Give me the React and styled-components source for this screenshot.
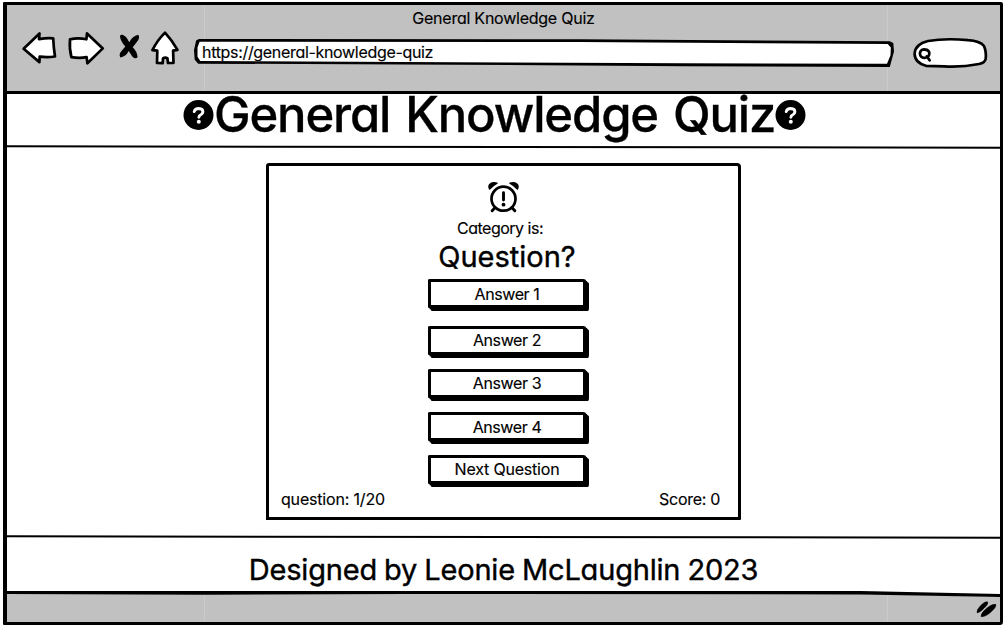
import React from "react";
import styled, { createGlobalStyle } from "styled-components";

const ink = "#000";
const chromeGray = "#c1c1c1";

const GlobalStyle = createGlobalStyle`
  * { box-sizing: border-box; }
  body {
    margin: 0;
    background: #fff;
    color: ${ink};
    font-family: Inter, "Liberation Sans", sans-serif;
    font-feature-settings: "cv11" 1;
    overflow: hidden;
  }
`;

const Window = styled.div`
  display: flex;
  flex-direction: column;
  width: 1000px;
  height: 623px;
  margin: 2px 0 0 3px;
  border: 3px solid ${ink};
  border-left-width: 4px;
  border-radius: 1px 2px 3px 1px;
`;

const Label = styled.span`
  display: block;
  margin: 0;
  font-size: ${(p) => p.$size || 16}px;
  line-height: ${(p) => p.$line || 20}px;
  font-weight: ${(p) => p.$weight || 400};
  letter-spacing: ${(p) => p.$track || 0}px;
  word-spacing: ${(p) => p.$word || 0}px;
  -webkit-text-stroke: ${(p) => p.$stroke || 0.15}px ${ink};
  stroke-linejoin: round;
  white-space: nowrap;
`;

const seams = `
  background-image: linear-gradient(#cbcbcb, #cbcbcb), linear-gradient(#cbcbcb, #cbcbcb);
  background-size: 1px 100%;
  background-position: 197px 0, 880px 0;
  background-repeat: no-repeat;
`;

const BrowserBar = styled.header`
  flex: none;
  height: 89px;
  padding-top: 3px;
  background-color: ${chromeGray};
  ${seams}
  border-bottom: 3px solid ${ink};
`;

const TitleRow = styled.div`
  display: flex;
  justify-content: center;
  height: 20px;
`;

const Toolbar = styled.div`
  display: flex;
  align-items: flex-start;
  padding: 1px 0 0 13px;
`;

const Tools = styled.div`
  flex: none;
  width: 174px;
  height: 40px;
`;

const AddressBar = styled.div`
  flex: none;
  width: 700px;
  height: 28px;
  margin-top: 10px;
  background: ${ink};
  clip-path: polygon(0.3% 5%, 0.7% 0, 55% 1%, 99.4% 8%, 99.9% 14%, 100% 45%, 99.4% 100%, 70% 97%, 30% 91%, 0.6% 88%, 0.1% 74%, 0 40%);
`;

const AddressField = styled.div`
  display: flex;
  align-items: center;
  height: 28px;
  padding: 0 0 3px 8px;
  background: #fff;
  clip-path: polygon(0.8% 10%, 55% 11%, 99.1% 18%, 99.55% 30%, 99.5% 58%, 99% 88%, 70% 87%, 30% 82%, 0.9% 79%, 0.5% 63%, 0.5% 30%);
`;

const SearchSlot = styled.div`
  flex: none;
  margin: 7px 0 0 17px;
  height: 34px;
`;

const Banner = styled.div`
  flex: none;
  display: flex;
  align-items: center;
  height: 52px;
  padding: 0 0 10px 176px;
`;

const Rule = styled.div`
  flex: none;
  height: 2px;
  margin-right: -3px;
  background: ${ink};
  transform: rotate(${(p) => p.$tilt}deg);
`;

const Stage = styled.main`
  flex: none;
  height: 388px;
  padding: 15px 0 0 259px;
`;

const Card = styled.section`
  display: flex;
  flex-direction: column;
  align-items: center;
  width: 475px;
  height: 357px;
  padding-top: 15px;
  border: 3px solid ${ink};
  border-right-width: 3.5px;
  border-radius: 3px 4px 1px 0;
`;

const Category = styled.div`
  margin: 5px 7px 0 0;
`;

const Prompt = styled.div`
  margin: 1px 0 0 7px;
`;

const Choices = styled.div`
  display: flex;
  flex-direction: column;
  margin: 4px 0 0 7px;
`;

const Choice = styled.button`
  display: flex;
  align-items: center;
  justify-content: center;
  width: 158px;
  height: 29px;
  margin: 0 0 ${(p) => p.$gap}px;
  padding: 0;
  border: 3px solid ${ink};
  border-radius: 2px 3px 1px 1px / 1px 2px 3px 1px;
  background: #fff;
  color: inherit;
  font-family: inherit;
  font-feature-settings: inherit;
  box-shadow: 1.5px 1.5px 0 ${ink}, 3px 3px 0 ${ink};
`;

const Status = styled.div`
  display: flex;
  justify-content: space-between;
  width: 100%;
  padding: 5px 18px 0 12px;
`;

const Credit = styled.footer`
  flex: none;
  display: flex;
  justify-content: center;
  height: 53px;
  padding-top: 14px;
`;

const BottomBar = styled.div`
  flex: 1;
  display: flex;
  justify-content: flex-end;
  background-color: ${chromeGray};
  ${seams}
  clip-path: polygon(0 0, 86% 0, 100% 3px, 100% 100%, 0 100%);
`;

const BottomEdge = styled.div`
  flex: none;
  height: 6px;
  margin-bottom: -3px;
  background: ${ink};
  clip-path: polygon(0 0, 86% 0, 100% 3px, 100% 6px, 86% 3.4px, 40% 3px, 20% 3.8px, 0 3px);
  z-index: 1;
`;

function NavIcons() {
  return (
    <svg width="174" height="40" viewBox="20 28 174 40" fill="#fff" stroke={ink} strokeWidth="2.7" strokeLinejoin="round" strokeLinecap="round">
      <path d="M23.6 47.8L39.5 32.5L39 38.2Q47 36.8 53.2 37.4Q53.6 47 55 55.5Q47 56.6 39.7 55.6L39.4 61.1Z" />
      <path d="M70 38.4Q78 36.6 86.4 38.3L87 32.4L102.8 47.4L87.4 62.2L86.6 56.2Q79 57.5 71.4 56.1Q69.2 48 70 38.4Z" />
      <path d="M120 35.2Q120.2 33.6 122.4 33.8Q126.5 35.2 129.2 41.2Q132.4 34.8 138.2 33.7Q140.5 36.4 137 40.8L132.7 46.2Q137.2 50.5 137.6 56Q135.6 58.8 132.3 55.4L128.7 50Q125.7 56 120.3 56.4Q118.6 53.2 121.3 50.3L125.3 45.6Q120.5 40.2 120 35.2Z" fill={ink} stroke="none" />
      <path d="M165 31.6Q172 39.2 177.5 48.8L173.1 49.6L173.5 61.8L168 62L167.4 57.2Q165 56 163 57.4L162.7 62.2L157 62L157.3 49.7L152.4 49.2Q157 39.6 165 31.6Z" />
    </svg>
  );
}

function SearchBox() {
  return (
    <svg width="78" height="34" viewBox="911 35 78 34" fill="#fff" stroke={ink} strokeWidth="2.7" strokeLinecap="round" strokeLinejoin="round">
      <path d="M928 40Q946 37 968 39.2Q980 40 984 45Q986.6 51 985.6 58Q984.8 62 979 63Q962 66.4 944 65.4L926 64.8Q914.5 61.5 914.6 52.5Q915.4 43 928 40Z" />
      <path d="M927 48.8Q921 47 919.9 52Q920 57.2 925 56.8Q929.8 55.8 929.3 51.5Q928.6 48.8 924.5 48.6M926.8 55.4L929.6 59.3" strokeWidth="2.7" />
    </svg>
  );
}

function QuestionBadge() {
  return (
    <svg width="31" height="31" viewBox="0 0 31 31">
      <circle cx="15.5" cy="15" r="15" fill={ink} />
      <path d="M11.2 11.6Q12 8.5 15.9 8.5Q19.9 8.7 19.9 11.8Q19.8 13.7 17.8 14.8Q15.9 15.7 15.9 17.2" fill="none" stroke="#fff" strokeWidth="2.9" strokeLinecap="round" />
      <circle cx="15.8" cy="21.8" r="2" fill="#fff" />
    </svg>
  );
}

function AlarmIcon() {
  return (
    <svg width="32" height="32" viewBox="488 181 32 32" fill="none" stroke={ink} strokeLinecap="round">
      <circle cx="503.5" cy="198.7" r="12" strokeWidth="2.7" />
      <path d="M503.5 192.8V200" strokeWidth="2.9" />
      <circle cx="503.5" cy="204.7" r="1.9" fill={ink} stroke="none" />
      <path d="M495 207.6L492.2 210.8M512 207.6L514.8 210.8" strokeWidth="2.9" />
      <path d="M489.6 189C487.4 184.2 491.6 181.8 497 183.2Q492.8 185.6 489.6 189ZM517.4 189C519.6 184.2 515.4 181.8 510 183.2Q514.2 185.6 517.4 189Z" fill={ink} strokeWidth="1.5" strokeLinejoin="round" />
    </svg>
  );
}

function ResizeGrip() {
  return (
    <svg width="26" height="28" viewBox="974 595 26 28" fill={ink} stroke={ink} strokeWidth="0.5">
      <path d="M977 613.8Q976.3 610.8 981 606.2Q985.5 602 987.8 603Q988.2 605.8 984 609.3Q980 613.7 977 613.8Z" />
      <path d="M981 617.5Q980.8 614.3 986 609.7Q993 604.3 996 605.6Q996.3 608.6 991 613Q984.8 618.4 981 617.5Z" />
    </svg>
  );
}

const choices = [
  { text: "Answer 1", gap: 17.5, track: -0.4 },
  { text: "Answer 2", gap: 14, track: -0.4 },
  { text: "Answer 3", gap: 14.5, track: -0.4 },
  { text: "Answer 4", gap: 13.5, track: -0.4 },
  { text: "Next Question", gap: 0, track: -0.2 },
];

export default function App() {
  return (
    <>
      <GlobalStyle />
      <Window>
        <BrowserBar>
          <TitleRow>
            <Label $track={-0.24}>General Knowledge Quiz</Label>
          </TitleRow>
          <Toolbar>
            <Tools><NavIcons /></Tools>
            <AddressBar>
              <AddressField>
                <Label $track={-0.32}>https://general-knowledge-quiz</Label>
              </AddressField>
            </AddressBar>
            <SearchSlot><SearchBox /></SearchSlot>
          </Toolbar>
        </BrowserBar>
        <Banner>
          <QuestionBadge />
          <Label as="h1" $size={49} $line={52} $weight={500} $stroke={0.3} $track={-1.15} $word={3}>General Knowledge Quiz</Label>
          <QuestionBadge />
        </Banner>
        <Rule $tilt={0.08} />
        <Stage>
          <Card>
            <AlarmIcon />
            <Category><Label $track={-0.5}>Category is:</Label></Category>
            <Prompt><Label $size={29} $line={36} $stroke={0.4}>Question?</Label></Prompt>
            <Choices>
              {choices.map((c) => (
                <Choice key={c.text} $gap={c.gap}>
                  <Label $track={c.track}>{c.text}</Label>
                </Choice>
              ))}
            </Choices>
            <Status>
              <Label $track={-0.18}>question: 1/20</Label>
              <Label $track={-0.3}>Score: 0</Label>
            </Status>
          </Card>
        </Stage>
        <Rule $tilt={0.08} />
        <Credit>
          <Label $size={29} $line={36} $stroke={0.4} $track={-0.2} $word={-0.8}>Designed by Leonie McLaughlin 2023</Label>
        </Credit>
        <BottomEdge />
        <BottomBar><ResizeGrip /></BottomBar>
      </Window>
    </>
  );
}
